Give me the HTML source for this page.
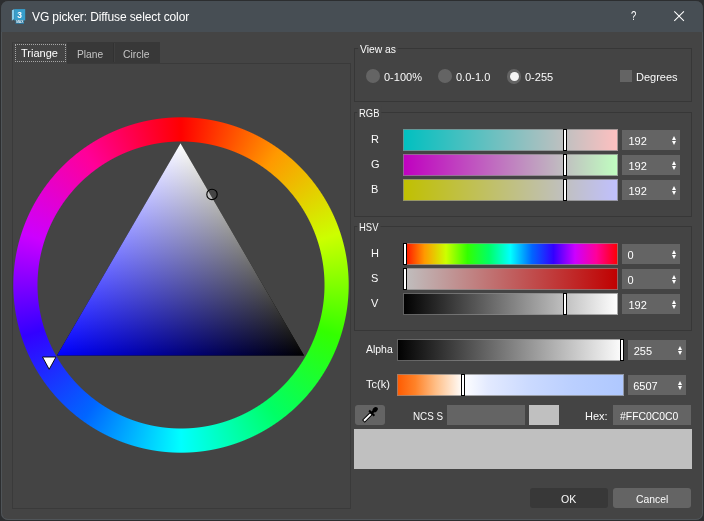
<!DOCTYPE html>
<html><head><meta charset="utf-8"><title>VG picker: Diffuse select color</title>
<style>
html,body{margin:0;padding:0;}
body{width:704px;height:521px;overflow:hidden;background:#2c2e30;font-family:"Liberation Sans","DejaVu Sans",sans-serif;font-size:11px;color:#fafafa;position:relative;}
.abs{position:absolute;}
#win{position:absolute;left:0;top:0;width:704px;height:521px;overflow:hidden;will-change:transform;}
#body{position:absolute;left:1px;top:1px;width:702px;height:519px;background:#444444;border-radius:7px;overflow:hidden;}
#title{position:absolute;left:0;top:0;width:704px;height:32px;background:#474e54;}
#title .t{position:absolute;left:33px;top:9px;font-size:12px;line-height:14px;color:#ffffff;white-space:nowrap;}
#edge{position:absolute;left:1px;top:32px;width:700px;height:487px;border:1px solid #4f5458;border-top:none;border-radius:0 0 7px 7px;}
.grp{position:absolute;border:1px solid #373737;box-sizing:border-box;}
.grp .lbl{position:absolute;left:3px;top:-7px;transform-origin:2px 0;background:#444444;padding:0 2px 0 2px;line-height:14px;white-space:nowrap;}
.bar{position:absolute;box-sizing:border-box;height:22px;width:215px;left:403px;box-shadow:inset 0 0 0 1px rgba(134,134,134,.72);}
.spin{position:absolute;left:622px;width:58px;height:20px;background:#646464;color:#fff;}
.spin span{position:absolute;left:6.5px;top:5px;line-height:13px;}
.spin i{position:absolute;left:49.9px;width:0;height:0;border-left:2.6px solid transparent;border-right:2.6px solid transparent;}
.spin i.u{top:5.8px;border-bottom:4px solid #fff;}
.spin i.d{top:10.7px;border-top:4px solid #fff;}
.hd{position:absolute;width:2px;height:20px;border:1px solid #000;background:#fff;}
.l{position:absolute;line-height:13px;white-space:nowrap;transform-origin:0 0;}
.radio{position:absolute;width:14px;height:14px;border-radius:50%;background:#646464;}
</style></head><body>
<div id="win">
<div id="body">
</div>
<div id="edge"></div>
<div class="abs" style="left:1px;top:1px;width:702px;height:31px;background:#474e54;border-radius:7px 7px 0 0;"></div>
<div id="titlec" class="abs" style="left:0;top:0;width:704px;height:32px;">
  <svg class="abs" style="left:11px;top:7.5px" width="17" height="18" viewBox="0 0 17 18">
   <path d="M0.9 2.2 L3.2 1.2 L3.2 11 L0.9 12.8 Z" fill="#86cdeb"/>
   <rect x="3.2" y="1.1" width="11" height="11.3" fill="#379ecb"/>
   <rect x="4.6" y="12.4" width="8.4" height="3.5" fill="#2a779f"/>
   <text x="8.5" y="10" font-family="Liberation Sans, sans-serif" font-size="8.4" font-weight="bold" fill="#fff" text-anchor="middle">3</text>
   <text x="8.8" y="15.4" font-family="Liberation Sans, sans-serif" font-size="3.3" font-weight="bold" fill="#e8f4fa" text-anchor="middle">MAX</text>
  </svg>
  <div class="l" style="left:32px;top:10px;font-size:12px;line-height:14px;color:#fff;letter-spacing:-0.11px;">VG picker: Diffuse select color</div>
  <div class="l" style="left:631px;top:8px;font-size:13px;line-height:15px;color:#fff;transform:scaleX(.74)">?</div>
  <svg class="abs" style="left:673px;top:10px" width="12" height="12" viewBox="0 0 12 12"><path d="M1.3 1.3 L10.9 10.9 M10.9 1.3 L1.3 10.9" stroke="#fff" stroke-width="1.05" fill="none"/></svg>
</div>

 <!-- tabs -->
 <div class="abs" style="left:12px;top:42px;width:148px;height:21px;background:#383838;"></div>
 <div class="abs" style="left:12px;top:63px;width:339px;height:446px;border:1px solid #3a3a3a;box-sizing:border-box;"></div>
 <div class="abs" style="left:12px;top:42px;width:55px;height:22px;background:#444444;border-left:1px solid #3a3a3a;border-top:1px solid #3e3e3e;box-sizing:border-box;"></div>
 <div class="abs" style="left:15px;top:44px;width:51px;height:18px;border:1px dotted #a6a6a6;box-sizing:border-box;"></div>
 <div class="abs" style="left:113px;top:43px;width:1px;height:19px;background:#323232;"></div><div class="abs" style="left:114px;top:43px;width:1px;height:19px;background:#3f3f3f;"></div>
 <div class="l" style="left:21px;top:47px;color:#fff;">Triange</div>
 <div class="l" style="left:77px;top:48px;color:#c4c4c4;transform:scaleX(.93)">Plane</div>
 <div class="l" style="left:123px;top:48px;color:#c4c4c4;transform:scaleX(.94)">Circle</div>

 <!-- wheel -->
 <div class="abs" style="left:10.8px;top:114.9px;width:340px;height:340px;background:conic-gradient(from 0deg,#ff0000 0deg,#ff9900 36deg,#ccff00 72deg,#33ff00 108deg,#00ff66 144deg,#00ffff 180deg,#0066ff 216deg,#3300ff 252deg,#cc00ff 288deg,#ff0099 324deg,#ff0000 360deg);-webkit-mask:radial-gradient(circle at center,transparent 143px,#000 144px,#000 167.2px,transparent 168.2px);mask:radial-gradient(circle at center,transparent 143px,#000 144px,#000 167.2px,transparent 168.2px);"></div>
 <svg class="abs" style="left:0;top:0" width="352" height="521" viewBox="0 0 352 521">
  <defs>
   <linearGradient id="gw" gradientUnits="userSpaceOnUse" x1="180.5" y1="143.3" x2="180.5" y2="355.6"><stop offset="0" stop-color="#ffff00"/><stop offset="1" stop-color="#000000"/></linearGradient>
   <linearGradient id="gb" gradientUnits="userSpaceOnUse" x1="304" y1="355.6" x2="118.75" y2="248.65"><stop offset="0" stop-color="#000000"/><stop offset="1" stop-color="#0000ff"/></linearGradient>
  </defs>
  <g style="isolation:isolate">
   <polygon points="180.5,143.3 57,355.6 304,355.6" fill="url(#gw)"/>
   <polygon points="180.5,143.3 57,355.6 304,355.6" fill="url(#gb)" style="mix-blend-mode:screen"/>
  </g>
  <circle cx="212" cy="194.4" r="5.2" fill="none" stroke="#000" stroke-width="1.1"/>
  <polygon points="42.5,357 56,357 49.2,369.3" fill="#fff" stroke="#000" stroke-width="0.9"/>
 </svg>

 <!-- View as -->
 <div class="grp" style="left:354px;top:48px;width:338px;height:54px;"><div class="lbl" style="transform:scaleX(.94)">View as</div></div>
 <div class="radio" style="left:366px;top:69.3px;"></div><div class="l" style="left:384px;top:71px;">0-100%</div>
 <div class="radio" style="left:438px;top:69.3px;"></div><div class="l" style="left:456px;top:71px;">0.0-1.0</div>
 <div class="radio" style="left:506.6px;top:69px;width:14.6px;height:14.6px;"></div><div class="abs" style="left:509.5px;top:71.8px;width:9px;height:9px;border-radius:50%;background:#f6f6f6"></div><div class="l" style="left:525px;top:71px;">0-255</div>
 <div class="abs" style="left:620px;top:70px;width:12px;height:12px;background:#646464;"></div><div class="l" style="left:636px;top:71px;">Degrees</div>

 <!-- RGB -->
 <div class="grp" style="left:354px;top:112px;width:338px;height:105px;"><div class="lbl" style="transform:scaleX(.86);margin-left:-1px">RGB</div></div>
 <div class="l" style="left:371px;top:133px;">R</div>
 <div class="l" style="left:371px;top:158px;">G</div>
 <div class="l" style="left:371px;top:183px;">B</div>
 <div class="bar" style="top:129px;background:linear-gradient(90deg,#00c0c0,#ffc0c0);"></div>
 <div class="bar" style="top:154px;background:linear-gradient(90deg,#c000c0,#c0ffc0);"></div>
 <div class="bar" style="top:179px;background:linear-gradient(90deg,#c0c000,#c0c0ff);"></div>
 <div class="hd" style="left:563px;top:129px;"></div>
 <div class="hd" style="left:563px;top:154px;"></div>
 <div class="hd" style="left:563px;top:179px;"></div>
 <div class="spin" style="top:130px;"><span>192</span><i class="u"></i><i class="d"></i></div>
 <div class="spin" style="top:155px;"><span>192</span><i class="u"></i><i class="d"></i></div>
 <div class="spin" style="top:180px;"><span>192</span><i class="u"></i><i class="d"></i></div>

 <!-- HSV -->
 <div class="grp" style="left:354px;top:226px;width:338px;height:105px;"><div class="lbl" style="transform:scaleX(.86);margin-left:-1px">HSV</div></div>
 <div class="l" style="left:371px;top:247px;">H</div>
 <div class="l" style="left:371px;top:272px;">S</div>
 <div class="l" style="left:371px;top:297px;">V</div>
 <div class="bar" style="top:243px;background:linear-gradient(90deg,#ff0000 0%,#ff9900 10%,#ccff00 20%,#33ff00 30%,#00ff66 40%,#00ffff 50%,#0066ff 60%,#3300ff 70%,#cc00ff 80%,#ff0099 90%,#ff0000 100%);"></div>
 <div class="bar" style="top:268px;background:linear-gradient(90deg,#c0c0c0,#c00000);"></div>
 <div class="bar" style="top:293px;background:linear-gradient(90deg,#000,#fff);"></div>
 <div class="hd" style="left:403px;top:243px;"></div>
 <div class="hd" style="left:403px;top:268px;"></div>
 <div class="hd" style="left:563px;top:293px;"></div>
 <div class="spin" style="top:244px;"><span style="left:5.5px">0</span><i class="u"></i><i class="d"></i></div>
 <div class="spin" style="top:269px;"><span style="left:5.5px">0</span><i class="u"></i><i class="d"></i></div>
 <div class="spin" style="top:294px;"><span>192</span><i class="u"></i><i class="d"></i></div>

 <!-- Alpha / Tc -->
 <div class="l" style="left:366px;top:343px;transform:scaleX(.95)">Alpha</div>
 <div class="bar" style="left:397px;width:227px;top:339px;background:linear-gradient(90deg,#000,#fff);"></div>
 <div class="hd" style="left:620px;top:339px;"></div>
 <div class="spin" style="left:628px;top:340px;"><span style="left:5.7px">255</span><i class="u"></i><i class="d"></i></div>
 <div class="l" style="left:366px;top:378px;">Tc(k)</div>
 <div class="bar" style="left:397px;width:227px;top:374px;background:linear-gradient(90deg,#ff5a00,#ff8228 8%,#ffbe86 17%,#fff4ea 27%,#ffffff 29%,#e3eaff 40%,#cbdaff 58%,#bacfff 78%,#afc8ff 100%);"></div>
 <div class="hd" style="left:461px;top:374px;"></div>
 <div class="spin" style="left:628px;top:375px;"><span style="left:5.2px">6507</span><i class="u"></i><i class="d"></i></div>

 <!-- bottom row -->
 <div class="abs" style="left:355px;top:405px;width:30px;height:20px;background:#646464;border-radius:3px;"></div>
 <svg class="abs" style="left:355px;top:405px" width="30" height="20" viewBox="355 405 30 20">
  <g transform="translate(375.2 409.6) rotate(45)">
   <ellipse cx="0" cy="0" rx="2.2" ry="2.9" fill="#000"/>
   <rect x="-1.2" y="2" width="2.4" height="3" fill="#000"/>
   <rect x="-3.7" y="3.9" width="7.4" height="2" fill="#000"/>
   <rect x="-1.9" y="5.8" width="3.8" height="10.9" fill="#000"/>
   <rect x="-0.95" y="6.4" width="1.9" height="9.4" fill="#fff"/>
  </g>
 </svg>
 <div class="l" style="left:413px;top:410px;transform:scaleX(.895)">NCS S</div>
 <div class="abs" style="left:447px;top:405px;width:78px;height:20px;background:#646464;"></div>
 <div class="abs" style="left:529px;top:405px;width:30px;height:20px;background:#c0c0c0;"></div>
 <div class="l" style="left:585px;top:410px;">Hex:</div>
 <div class="abs" style="left:613px;top:405px;width:78px;height:20px;background:#646464;"></div>
 <div class="l" style="left:620px;top:410px;color:#fff;transform:scaleX(.945)">#FFC0C0C0</div>
 <div class="abs" style="left:354px;top:429px;width:338px;height:40px;background:#c0c0c0;"></div>

 <div class="abs" style="left:530px;top:488px;width:78px;height:20px;background:#383838;border-radius:3px;"></div>
 <div class="l" style="left:561px;top:493px;transform:scaleX(.96)">OK</div>
 <div class="abs" style="left:613px;top:488px;width:78px;height:20px;background:#646464;border-radius:3px;"></div>
 <div class="l" style="left:635.5px;top:493px;transform:scaleX(.94)">Cancel</div>
</div>
</body></html>
